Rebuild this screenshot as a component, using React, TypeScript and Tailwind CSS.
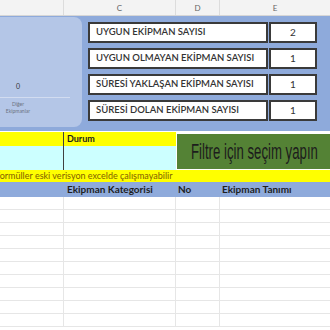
export default function App() {
  const boxes = [
    { label: "UYGUN EKİPMAN SAYISI", value: "2" },
    { label: "UYGUN OLMAYAN EKİPMAN SAYISI", value: "1" },
    { label: "SÜRESİ YAKLAŞAN EKİPMAN SAYISI", value: "1" },
    { label: "SÜRESİ DOLAN EKİPMAN SAYISI", value: "1" },
  ];
  const rows = Array.from({ length: 10 });

  return (
    <div className="w-[330px] h-[330px] overflow-hidden bg-white font-['Lato','Open_Sans',sans-serif] text-[#262626]">
      {/* column letters */}
      <div className="grid grid-cols-[64px_112px_44px_110px] h-[16px] bg-[#f3f3f3] border-b border-[#d6d6d6] text-[8px] text-[#666]">
        <div className="border-r border-[#dcdcdc]" />
        <div className="flex items-center justify-center border-r border-[#dcdcdc]">C</div>
        <div className="flex items-center justify-center border-r border-[#dcdcdc]">D</div>
        <div className="flex items-center justify-center">E</div>
      </div>

      {/* dashboard */}
      <div className="flex h-[115px] bg-[#8eaadb]">
        <div className="-ml-[8px] mt-[1px] h-[110px] w-[90px] shrink-0 rounded-[8px] bg-[#b4c6e7] relative">
          <div className="absolute left-[8px] top-[64px] w-[36px] text-center text-[7px] text-[#333]">0</div>
          <div className="absolute left-[0px] top-[80px] w-[78px] h-px bg-[#d2dcf0]" />
          <div className="absolute left-[8px] top-[84px] w-[36px] text-center text-[5px] leading-[7px] text-[#6b7280]">
            Diğer
            <br />
            Ekipmanlar
          </div>
        </div>
        <div className="ml-[6px] pt-[6px] flex flex-col gap-[5px]">
          {boxes.map((b) => (
            <div key={b.label} className="flex gap-[1px] h-[21px]">
              <div className="w-[180px] border-2 border-[#3a3a3a] bg-white flex items-center pl-[6px] text-[9.5px] font-semibold text-[#333] whitespace-nowrap">
                {b.label}
              </div>
              <div className="w-[48px] border-2 border-[#3a3a3a] bg-white flex items-center justify-center text-[10px] text-[#333]">
                {b.value}
              </div>
            </div>
          ))}
        </div>
      </div>

      {/* filter area */}
      <div className="mt-[1px] flex h-[38px]">
        <div className="w-[176px] flex flex-col">
          <div className="h-[14px] bg-[#ffff00] grid grid-cols-[64px_112px]">
            <div className="border-r border-[#404040]" />
            <div className="flex items-center pl-[3px] text-[9px] font-bold text-[#1a1a1a]">Durum</div>
          </div>
          <div className="flex-1 bg-[#ccffff] grid grid-cols-[64px_112px]">
            <div className="border-r border-[#404040]" />
            <div />
          </div>
        </div>
        <div className="ml-[1px] mt-[2px] mb-[1px] flex-1 bg-[#548235] flex items-center pl-[14px] overflow-hidden">
          <span className="inline-block origin-left scale-x-[0.6] font-['Liberation_Sans',sans-serif] text-[22px] leading-none text-[#1c1c1c] whitespace-nowrap">
            Filtre için seçim yapın
          </span>
        </div>
      </div>

      {/* warning strip */}
      <div className="h-[12px] bg-[#ffff00] flex items-center overflow-hidden text-[9px] text-[#7f6000] whitespace-nowrap">
        <span className="-ml-[5px]">Formüller eski verisyon excelde çalışmayabilir</span>
      </div>

      {/* table header */}
      <div className="grid grid-cols-[64px_112px_44px_110px] h-[15px] bg-[#8eaadb] text-[10px] font-bold text-[#1f1f1f] whitespace-nowrap">
        <div />
        <div className="flex items-center pl-[3px]">Ekipman Kategorisi</div>
        <div className="flex items-center pl-[2px]">No</div>
        <div className="flex items-center pl-[2px]">Ekipman Tanımı</div>
      </div>

      {rows.map((_, i) => (
        <div key={i} className="grid grid-cols-[64px_112px_44px_110px] h-[13px] border-b border-[#e6e6e6]">
          <div className="border-r border-[#e6e6e6]" />
          <div className="border-r border-[#e6e6e6]" />
          <div className="border-r border-[#e6e6e6]" />
          <div />
        </div>
      ))}
    </div>
  );
}
